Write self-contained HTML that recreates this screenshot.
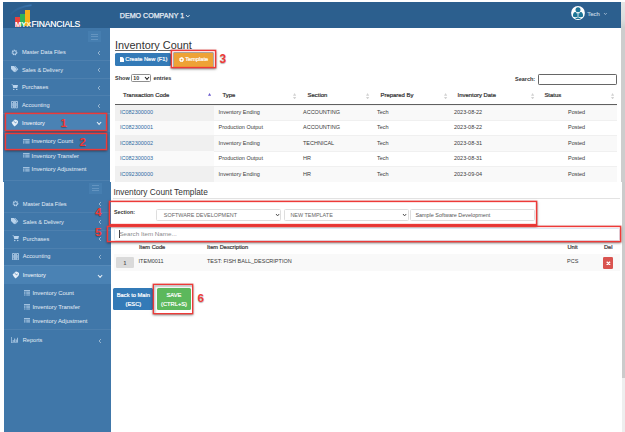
<!DOCTYPE html><html lang="en"><head><meta charset="utf-8"><title>Inventory Count</title><style>
*{box-sizing:border-box;margin:0;padding:0}
html,body{width:625px;height:432px;overflow:hidden;background:#fff}
body{position:relative;opacity:0.9999;font-family:"Liberation Sans",Arial,sans-serif;color:#333;font-size:5.5px;line-height:10px}
.a{position:absolute;white-space:nowrap}
.hd{background:#2c5f8e}
.sb{background:#4077a9}
.mi{color:#e3ecf5;font-size:5.6px;left:22px}
.mi2{color:#e6eef6;font-size:5.9px}
.dv{height:0.8px;background:rgba(255,255,255,.07);left:3px;width:107px}
.chev{color:#c9d9e8;font-size:6px;font-family:"DejaVu Sans",sans-serif}
.th{font-weight:bold;color:#333;font-size:5.5px}
.td{font-size:5.5px;color:#3a3a3a}
.lk{color:#2f6aa3}
.row{left:115px;width:501.5px;height:15.5px}
.odd{background:#f9f9f9}
.s1{left:115px;width:99px;height:15.5px}
.rb{border:1px solid #ee3a38;box-shadow:0 0 0 0.45px rgba(238,58,56,.75),inset 0 0 0 0.3px rgba(238,58,56,.6),0 1px 2.5px rgba(0,0,0,.55)}
.num{color:#ee3a38;font-weight:bold;font-size:13px;line-height:14px;text-shadow:0 0.5px 1px rgba(0,0,0,.3)}
.btn{color:#fff;font-weight:normal;-webkit-text-stroke:0.2px #fff;font-size:5.7px;text-align:center;border-radius:1.5px}
.fc{border:1px solid #dedede;border-radius:1.5px;background:#fff;height:12.5px;top:208.5px}
.sorticon{color:#ccc;font-size:4px;line-height:3px;font-family:"DejaVu Sans",sans-serif}
</style></head><body>
<div class="a" style="left:621px;top:2px;width:4px;height:180px;background:#cdcdcd"></div>
<div class="a" style="left:621px;top:2px;width:4px;height:26px;background:linear-gradient(#e6e6e6,#dcdcdc 70%,#cdcdcd)"></div>
<div class="a" style="left:622.3px;top:181.6px;width:3px;height:250.4px;background:#eee"></div>
<div class="a" style="left:622.3px;top:181.6px;width:3px;height:196px;background:#cbcbcb"></div>
<div class="a hd" style="left:3px;top:2px;width:618px;height:26.4px"></div>
<div class="a sb" style="left:3px;top:28.3px;width:107px;height:153.7px"></div>
<div class="a sb" style="left:3.5px;top:181.6px;width:107.7px;height:251px"></div>
<svg class="a" style="left:8px;top:4px" width="26" height="16" viewBox="0 0 26 16"><defs><linearGradient id="ag" x1="0" y1="0" x2="1" y2="0"><stop offset="0" stop-color="#3a74ad" stop-opacity=".15"/><stop offset="1" stop-color="#3d7cba" stop-opacity=".8"/></linearGradient></defs><path d="M2.5 10.5 Q9 3 23.5 1.2" fill="none" stroke="url(#ag)" stroke-width="1.7"/></svg>
<div class="a" style="left:15.1px;top:17px;width:4.9px;height:9.5px;background:#e8413c"></div>
<div class="a" style="left:20px;top:14.4px;width:4.9px;height:12.1px;background:#2fb457"></div>
<div class="a" style="left:25px;top:10.2px;width:5.2px;height:16.3px;background:#f5b21a"></div>
<div class="a" style="left:14.8px;top:20.6px;font-size:6.3px;font-weight:bold;color:#fff;line-height:7px;transform-origin:0 0;transform:scaleX(1.2)">MY<span style="color:#fff3c4">X</span></div>
<div class="a" style="left:31.5px;top:19.4px;font-size:8.6px;color:#f0f4f8;line-height:10px;letter-spacing:-0.2px;text-shadow:0 0 0.4px #f0f4f8">FINANCIALS</div>
<div class="a" style="left:119.8px;top:10.7px;font-size:7.1px;font-weight:normal;-webkit-text-stroke:0.25px #e8eef5;color:#e8eef5;line-height:10px">DEMO COMPANY 1</div>
<svg class="a" style="left:185.2px;top:14.2px" width="5.6" height="4" viewBox="0 0 5.6 4"><path d="M1 1 L2.8 3 L4.6 1" fill="none" stroke="#dfe8f1" stroke-width="0.9"/></svg>
<svg class="a" style="left:571.2px;top:6.3px" width="14" height="14" viewBox="0 0 14 14"><circle cx="7" cy="7" r="6.9" fill="#fff"/><circle cx="7" cy="3.7" r="2.5" fill="#1d7596"/><path d="M1.9 10.6 Q1.9 6.2 4.2 6.1 Q6.3 6.2 6.2 10.9 Q4 11.6 1.9 10.6 Z" fill="#1d7596"/><path d="M12.1 10.6 Q12.1 6.2 9.8 6.1 Q7.7 6.2 7.8 10.9 Q10 11.6 12.1 10.6 Z" fill="#1d7596"/><path d="M6.45 7.2 H7.55 V11.9 H9.4 V12.9 H4.6 V11.9 H6.45 Z" fill="#1d7596"/></svg>
<div class="a" style="left:587.3px;top:9.1px;font-size:5.9px;font-weight:normal;-webkit-text-stroke:0.2px #b4c8dc;color:#b4c8dc;line-height:10px">Tech</div>
<svg class="a" style="left:603.2px;top:12.399999999999999px" width="4.8" height="3.6" viewBox="0 0 4.8 3.6"><path d="M1 1 L2.4 2.6 L3.8 1" fill="none" stroke="#a9c0d6" stroke-width="0.8"/></svg>
<div class="a" style="left:88.2px;top:31.1px;width:13.1px;height:11.2px;background:#467eb0"></div>
<div class="a" style="left:91.10000000000001px;top:33.7px;width:7.3px;height:0.9px;background:#6494c0"></div>
<div class="a" style="left:91.10000000000001px;top:36.25px;width:7.3px;height:0.9px;background:#6494c0"></div>
<div class="a" style="left:91.10000000000001px;top:38.800000000000004px;width:7.3px;height:0.9px;background:#6494c0"></div>
<div class="a" style="left:89.4px;top:182.6px;width:12.6px;height:11.2px;background:#467eb0"></div>
<div class="a" style="left:92.30000000000001px;top:185.2px;width:6.8px;height:0.9px;background:#6494c0"></div>
<div class="a" style="left:92.30000000000001px;top:187.75px;width:6.8px;height:0.9px;background:#6494c0"></div>
<div class="a" style="left:92.30000000000001px;top:190.29999999999998px;width:6.8px;height:0.9px;background:#6494c0"></div>
<div class="a" style="left:3px;top:113px;width:107px;height:18.6px;background:#4a82b4"></div>
<svg class="a" style="left:11px;top:48.7px" width="7" height="7" viewBox="0 0 14 14"><circle cx="7" cy="7" r="4.6" fill="none" stroke="#b9d3ec" stroke-width="2.2" stroke-dasharray="2.4 1.2"/><circle cx="7" cy="7" r="3.4" fill="none" stroke="#b9d3ec" stroke-width="1.6"/></svg>
<div class="a mi" style="left:21.9px;top:47.2px;color:#e3ecf5">Master Data Files</div>
<svg class="a" style="left:97.0px;top:49.800000000000004px" width="4" height="6" viewBox="0 0 4 6"><path d="M3 1 L1 3.0 L3 5" fill="none" stroke="#b9cde0" stroke-width="0.7"/></svg>
<svg class="a" style="left:10.5px;top:66.3px" width="8" height="6.5" viewBox="0 0 16 13"><path d="M0 0 H6 L12 6.5 L6.5 12.5 L0 6 Z" fill="#b9d3ec"/><path d="M8.5 0 L14.5 6.5 L9 12.5 L8 11.5 L12.5 6.5 L7 0 Z" fill="#b9d3ec"/></svg>
<div class="a mi" style="left:21.9px;top:64.5px;color:#e3ecf5">Sales &amp; Delivery</div>
<svg class="a" style="left:97.0px;top:67.1px" width="4" height="6" viewBox="0 0 4 6"><path d="M3 1 L1 3.0 L3 5" fill="none" stroke="#b9cde0" stroke-width="0.7"/></svg>
<svg class="a" style="left:11px;top:83.8px" width="7.5" height="6.5" viewBox="0 0 15 13"><path d="M0 0.5 H3 L4 2 H14 L12.5 8 H4.5 L3 2 Z" fill="#b9d3ec"/><circle cx="5.5" cy="11" r="1.5" fill="#b9d3ec"/><circle cx="11.5" cy="11" r="1.5" fill="#b9d3ec"/></svg>
<div class="a mi" style="left:21.9px;top:82.1px;color:#e3ecf5">Purchases</div>
<svg class="a" style="left:97.0px;top:84.69999999999999px" width="4" height="6" viewBox="0 0 4 6"><path d="M3 1 L1 3.0 L3 5" fill="none" stroke="#b9cde0" stroke-width="0.7"/></svg>
<svg class="a" style="left:11px;top:101.2px" width="7" height="7.4" viewBox="0 0 14 15"><path d="M1 1 H5 V14 H1 Z M9 1 H13 V14 H9 Z" fill="none" stroke="#b9d3ec" stroke-width="1.6"/><path d="M6.3 0 H7.7 V15 H6.3 Z" fill="#b9d3ec"/><path d="M2.5 4 H3.6 V11 H2.5 Z M10.4 4 H11.5 V11 H10.4 Z" fill="#b9d3ec"/></svg>
<div class="a mi" style="left:21.9px;top:99.9px;color:#e3ecf5">Accounting</div>
<svg class="a" style="left:97.0px;top:102.5px" width="4" height="6" viewBox="0 0 4 6"><path d="M3 1 L1 3.0 L3 5" fill="none" stroke="#b9cde0" stroke-width="0.7"/></svg>
<svg class="a" style="left:10.6px;top:118.7px" width="7.6" height="8" viewBox="0 0 15 16"><path d="M1 7 L7.5 0.8 Q11 0.5 14 4.2 Q14.5 8 12 10.5 L7.2 15.2 Q4 13 1 7 Z" fill="#e4eef8"/><path d="M4.5 4.8 L6.5 3.4 L8 5.2 Z" fill="#4a82b4"/><path d="M7.2 6.2 Q8.2 9.2 11 6.2" fill="none" stroke="#4a82b4" stroke-width="1.7"/></svg>
<div class="a mi" style="left:21.9px;top:117.9px;color:#fff">Inventory</div>
<svg class="a" style="left:95.9px;top:121.2px" width="6.2" height="4.4" viewBox="0 0 6.2 4.4"><path d="M1 1 L3.1 3.4 L5.2 1" fill="none" stroke="#e9f0f7" stroke-width="1.05"/></svg>
<div class="a dv" style="top:60.4px;left:3px"></div>
<div class="a dv" style="top:77.8px;left:3px"></div>
<div class="a dv" style="top:95.2px;left:3px"></div>
<div class="a dv" style="top:112.6px;left:3px"></div>
<div class="a" style="left:3.5px;top:264.6px;width:107.7px;height:19.4px;background:#4a82b4"></div>
<svg class="a" style="left:11.9px;top:200.2px" width="7" height="7" viewBox="0 0 14 14"><circle cx="7" cy="7" r="4.6" fill="none" stroke="#b9d3ec" stroke-width="2.2" stroke-dasharray="2.4 1.2"/><circle cx="7" cy="7" r="3.4" fill="none" stroke="#b9d3ec" stroke-width="1.6"/></svg>
<div class="a mi" style="left:22.799999999999997px;top:198.7px;color:#e3ecf5">Master Data Files</div>
<svg class="a" style="left:98.0px;top:201.29999999999998px" width="4" height="6" viewBox="0 0 4 6"><path d="M3 1 L1 3.0 L3 5" fill="none" stroke="#b9cde0" stroke-width="0.7"/></svg>
<svg class="a" style="left:11.4px;top:218.3px" width="8" height="6.5" viewBox="0 0 16 13"><path d="M0 0 H6 L12 6.5 L6.5 12.5 L0 6 Z" fill="#b9d3ec"/><path d="M8.5 0 L14.5 6.5 L9 12.5 L8 11.5 L12.5 6.5 L7 0 Z" fill="#b9d3ec"/></svg>
<div class="a mi" style="left:22.799999999999997px;top:216.5px;color:#e3ecf5">Sales &amp; Delivery</div>
<svg class="a" style="left:98.0px;top:219.1px" width="4" height="6" viewBox="0 0 4 6"><path d="M3 1 L1 3.0 L3 5" fill="none" stroke="#b9cde0" stroke-width="0.7"/></svg>
<svg class="a" style="left:11.9px;top:235.29999999999998px" width="7.5" height="6.5" viewBox="0 0 15 13"><path d="M0 0.5 H3 L4 2 H14 L12.5 8 H4.5 L3 2 Z" fill="#b9d3ec"/><circle cx="5.5" cy="11" r="1.5" fill="#b9d3ec"/><circle cx="11.5" cy="11" r="1.5" fill="#b9d3ec"/></svg>
<div class="a mi" style="left:22.799999999999997px;top:233.6px;color:#e3ecf5">Purchases</div>
<svg class="a" style="left:98.0px;top:236.2px" width="4" height="6" viewBox="0 0 4 6"><path d="M3 1 L1 3.0 L3 5" fill="none" stroke="#b9cde0" stroke-width="0.7"/></svg>
<svg class="a" style="left:11.9px;top:252.60000000000002px" width="7" height="7.4" viewBox="0 0 14 15"><path d="M1 1 H5 V14 H1 Z M9 1 H13 V14 H9 Z" fill="none" stroke="#b9d3ec" stroke-width="1.6"/><path d="M6.3 0 H7.7 V15 H6.3 Z" fill="#b9d3ec"/><path d="M2.5 4 H3.6 V11 H2.5 Z M10.4 4 H11.5 V11 H10.4 Z" fill="#b9d3ec"/></svg>
<div class="a mi" style="left:22.799999999999997px;top:251.3px;color:#e3ecf5">Accounting</div>
<svg class="a" style="left:98.0px;top:253.90000000000003px" width="4" height="6" viewBox="0 0 4 6"><path d="M3 1 L1 3.0 L3 5" fill="none" stroke="#b9cde0" stroke-width="0.7"/></svg>
<svg class="a" style="left:11.5px;top:271.0px" width="7.6" height="8" viewBox="0 0 15 16"><path d="M1 7 L7.5 0.8 Q11 0.5 14 4.2 Q14.5 8 12 10.5 L7.2 15.2 Q4 13 1 7 Z" fill="#e4eef8"/><path d="M4.5 4.8 L6.5 3.4 L8 5.2 Z" fill="#4a82b4"/><path d="M7.2 6.2 Q8.2 9.2 11 6.2" fill="none" stroke="#4a82b4" stroke-width="1.7"/></svg>
<div class="a mi" style="left:22.799999999999997px;top:270.2px;color:#fff">Inventory</div>
<svg class="a" style="left:96.9px;top:273.5px" width="6.2" height="4.4" viewBox="0 0 6.2 4.4"><path d="M1 1 L3.1 3.4 L5.2 1" fill="none" stroke="#e9f0f7" stroke-width="1.05"/></svg>
<div class="a dv" style="top:212.4px;left:3.9px"></div>
<div class="a dv" style="top:230px;left:3.9px"></div>
<div class="a dv" style="top:247.6px;left:3.9px"></div>
<div class="a dv" style="top:265.2px;left:3.9px"></div>
<div class="a" style="left:5.2px;top:132.8px;width:102.2px;height:17.6px;background:#3c73a6"></div>
<svg class="a" style="left:23px;top:138.6px" width="6.6" height="5.6" viewBox="0 0 13 11"><path d="M0 0 H13 V2.4 H0 Z M0 3.6 H3 V5.4 H0 Z M4.4 3.6 H13 V5.4 H4.4 Z M0 6.4 H3 V8.2 H0 Z M4.4 6.4 H13 V8.2 H4.4 Z M0 9.2 H3 V11 H0 Z M4.4 9.2 H13 V11 H4.4 Z" fill="#b9d3ec" opacity=".8"/></svg>
<div class="a mi2" style="left:31.5px;top:136.4px">Inventory Count</div>
<svg class="a" style="left:23px;top:152.79999999999998px" width="6.6" height="5.6" viewBox="0 0 13 11"><path d="M0 0 H13 V2.4 H0 Z M0 3.6 H3 V5.4 H0 Z M4.4 3.6 H13 V5.4 H4.4 Z M0 6.4 H3 V8.2 H0 Z M4.4 6.4 H13 V8.2 H4.4 Z M0 9.2 H3 V11 H0 Z M4.4 9.2 H13 V11 H4.4 Z" fill="#b9d3ec" opacity=".8"/></svg>
<div class="a mi2" style="left:31.5px;top:150.6px">Inventory Transfer</div>
<svg class="a" style="left:23px;top:166.5px" width="6.6" height="5.6" viewBox="0 0 13 11"><path d="M0 0 H13 V2.4 H0 Z M0 3.6 H3 V5.4 H0 Z M4.4 3.6 H13 V5.4 H4.4 Z M0 6.4 H3 V8.2 H0 Z M4.4 6.4 H13 V8.2 H4.4 Z M0 9.2 H3 V11 H0 Z M4.4 9.2 H13 V11 H4.4 Z" fill="#b9d3ec" opacity=".8"/></svg>
<div class="a mi2" style="left:31.5px;top:164.3px">Inventory Adjustment</div>
<svg class="a" style="left:23.9px;top:290.4px" width="6.6" height="5.6" viewBox="0 0 13 11"><path d="M0 0 H13 V2.4 H0 Z M0 3.6 H3 V5.4 H0 Z M4.4 3.6 H13 V5.4 H4.4 Z M0 6.4 H3 V8.2 H0 Z M4.4 6.4 H13 V8.2 H4.4 Z M0 9.2 H3 V11 H0 Z M4.4 9.2 H13 V11 H4.4 Z" fill="#b9d3ec" opacity=".8"/></svg>
<div class="a mi2" style="left:32.4px;top:288.2px">Inventory Count</div>
<svg class="a" style="left:23.9px;top:304.3px" width="6.6" height="5.6" viewBox="0 0 13 11"><path d="M0 0 H13 V2.4 H0 Z M0 3.6 H3 V5.4 H0 Z M4.4 3.6 H13 V5.4 H4.4 Z M0 6.4 H3 V8.2 H0 Z M4.4 6.4 H13 V8.2 H4.4 Z M0 9.2 H3 V11 H0 Z M4.4 9.2 H13 V11 H4.4 Z" fill="#b9d3ec" opacity=".8"/></svg>
<div class="a mi2" style="left:32.4px;top:302.1px">Inventory Transfer</div>
<svg class="a" style="left:23.9px;top:317.7px" width="6.6" height="5.6" viewBox="0 0 13 11"><path d="M0 0 H13 V2.4 H0 Z M0 3.6 H3 V5.4 H0 Z M4.4 3.6 H13 V5.4 H4.4 Z M0 6.4 H3 V8.2 H0 Z M4.4 6.4 H13 V8.2 H4.4 Z M0 9.2 H3 V11 H0 Z M4.4 9.2 H13 V11 H4.4 Z" fill="#b9d3ec" opacity=".8"/></svg>
<div class="a mi2" style="left:32.4px;top:315.5px">Inventory Adjustment</div>
<div class="a dv" style="top:179.6px"></div>
<div class="a dv" style="top:329.4px;left:3.9px"></div>
<div class="a" style="left:3px;top:381px;width:1.3px;height:51px;background:#fff"></div>
<svg class="a" style="left:10.8px;top:336.7px" width="7.4" height="6.4" viewBox="0 0 15 13"><path d="M0.5 0 H1.8 V11.2 H15 V12.5 H0.5 Z M3.5 6 H5.3 V10 H3.5 Z M6.6 3 H8.4 V10 H6.6 Z M9.7 5 H11.5 V10 H9.7 Z M12.6 1.5 H14.2 V10 H12.6 Z" fill="#b9d3ec"/></svg>
<div class="a mi" style="left:22.8px;top:335px">Reports</div>
<svg class="a" style="left:98.0px;top:337.6px" width="4" height="6" viewBox="0 0 4 6"><path d="M3 1 L1 3.0 L3 5" fill="none" stroke="#b9cde0" stroke-width="0.7"/></svg>
<div class="a rb" style="left:5.2px;top:113.3px;width:102.2px;height:17.7px"></div>
<div class="a rb" style="left:5.2px;top:132.8px;width:102.2px;height:17.6px"></div>
<div class="a num" style="left:60.6px;top:116px;font-size:11.5px">1</div>
<div class="a num" style="left:79.6px;top:134.6px;font-size:11.5px">2</div>
<div class="a" style="left:115px;top:38.5px;font-size:10.9px;line-height:13px;color:#333;text-decoration:underline;text-decoration-thickness:0.8px;text-decoration-color:#6a6a6a;text-underline-offset:1px">Inventory Count</div>
<div class="a btn" style="left:114.6px;top:53.3px;width:56.4px;height:13px;background:#337ab7;line-height:13px;padding-left:1.5px"><svg width="4" height="5" viewBox="0 0 8 10" style="vertical-align:-0.8px;margin-right:1.6px"><path d="M0 0 H5 L8 3 V10 H0 Z" fill="#fff"/></svg>Create New (F1)</div>
<div class="a btn" style="left:173.6px;top:52.8px;width:39.9px;height:13.8px;background:#eea236;line-height:13.6px;border-radius:0.6px;box-shadow:0 0 0 0.9px #a8a29a"><svg width="5.2" height="5.2" viewBox="0 0 10 10" style="vertical-align:-1px;margin-right:1.2px"><circle cx="5" cy="5" r="3" fill="none" stroke="#fff" stroke-width="2.6"/><circle cx="5" cy="5" r="4.2" fill="none" stroke="#fff" stroke-width="1.6" stroke-dasharray="1.6 1.7"/></svg>Template</div>
<div class="a rb" style="left:170.7px;top:50.4px;width:45.3px;height:17.2px"></div>
<div class="a num" style="left:219.6px;top:51.6px;font-size:12px">3</div>
<div class="a th" style="left:115px;top:73.2px">Show</div>
<div class="a" style="left:131.2px;top:74.2px;width:20.1px;height:8.3px;border:1px solid #8f8f8f;border-radius:1.4px;background:#fff"></div>
<div class="a td" style="left:133.3px;top:73.4px;font-size:5.3px;font-weight:bold">10</div>
<svg class="a" style="left:143.8px;top:76.44999999999999px" width="6" height="4.3" viewBox="0 0 6 4.3"><path d="M1 1 L3.0 3.3 L5 1" fill="none" stroke="#222" stroke-width="1.1"/></svg>
<div class="a th" style="left:153.4px;top:73.2px">entries</div>
<div class="a th" style="left:515px;top:74.2px">Search:</div>
<div class="a" style="left:537.5px;top:74.2px;width:79.1px;height:11px;border:1px solid #666;border-radius:1.2px;background:#fff"></div>
<div class="a th" style="left:123px;top:90.4px;font-weight:normal;font-size:5.92px;-webkit-text-stroke:0.22px #333">Transaction Code</div>
<div class="a th" style="left:222.6px;top:90.4px;font-weight:normal;font-size:5.92px;-webkit-text-stroke:0.22px #333">Type</div>
<div class="a th" style="left:307.6px;top:90.4px;font-weight:normal;font-size:5.92px;-webkit-text-stroke:0.22px #333">Section</div>
<div class="a th" style="left:380.6px;top:90.4px;font-weight:normal;font-size:5.92px;-webkit-text-stroke:0.22px #333">Prepared By</div>
<div class="a th" style="left:457.6px;top:90.4px;font-weight:normal;font-size:5.92px;-webkit-text-stroke:0.22px #333">Inventory Date</div>
<div class="a th" style="left:544.4px;top:90.4px;font-weight:normal;font-size:5.92px;-webkit-text-stroke:0.22px #333">Status</div>
<div class="a" style="left:115px;top:104px;width:501.5px;height:1px;background:#606060"></div>
<svg class="a" style="left:207.7px;top:93px" width="3.2" height="2.8" viewBox="0 0 8 7"><path d="M4 0 L8 7 H0 Z" fill="#6a5acd"/></svg>
<svg class="a" style="left:293.4px;top:92.6px" width="3.2" height="6.6" viewBox="0 0 8 16"><path d="M4 0 L8 6.5 H0 Z M4 16 L8 9.5 H0 Z" fill="#d2d2d2"/></svg>
<svg class="a" style="left:366.4px;top:92.6px" width="3.2" height="6.6" viewBox="0 0 8 16"><path d="M4 0 L8 6.5 H0 Z M4 16 L8 9.5 H0 Z" fill="#d2d2d2"/></svg>
<svg class="a" style="left:444.4px;top:92.6px" width="3.2" height="6.6" viewBox="0 0 8 16"><path d="M4 0 L8 6.5 H0 Z M4 16 L8 9.5 H0 Z" fill="#d2d2d2"/></svg>
<svg class="a" style="left:531.4px;top:92.6px" width="3.2" height="6.6" viewBox="0 0 8 16"><path d="M4 0 L8 6.5 H0 Z M4 16 L8 9.5 H0 Z" fill="#d2d2d2"/></svg>
<svg class="a" style="left:611.0px;top:92.6px" width="3.2" height="6.6" viewBox="0 0 8 16"><path d="M4 0 L8 6.5 H0 Z M4 16 L8 9.5 H0 Z" fill="#d2d2d2"/></svg>
<div class="a row" style="top:104.6px;background:#f9f9f9;border-top:0.6px solid #f0f0f0"></div>
<div class="a s1" style="top:105.19999999999999px;height:14.9px;background:#f0f0f0"></div>
<div class="a td lk" style="left:120px;top:106.89999999999999px">IC082300000</div>
<div class="a td" style="left:218.6px;top:106.89999999999999px">Inventory Ending</div>
<div class="a td" style="left:303px;top:106.89999999999999px">ACCOUNTING</div>
<div class="a td" style="left:377px;top:106.89999999999999px">Tech</div>
<div class="a td" style="left:454px;top:106.89999999999999px">2023-08-22</div>
<div class="a td" style="left:568px;top:106.89999999999999px">Posted</div>
<div class="a row" style="top:120.0px;background:#fff;border-top:0.6px solid #f0f0f0"></div>
<div class="a s1" style="top:120.6px;height:14.9px;background:#fafafa"></div>
<div class="a td lk" style="left:120px;top:122.3px">IC082300001</div>
<div class="a td" style="left:218.6px;top:122.3px">Production Output</div>
<div class="a td" style="left:303px;top:122.3px">ACCOUNTING</div>
<div class="a td" style="left:377px;top:122.3px">Tech</div>
<div class="a td" style="left:454px;top:122.3px">2023-08-22</div>
<div class="a td" style="left:568px;top:122.3px">Posted</div>
<div class="a row" style="top:135.4px;background:#f9f9f9;border-top:0.6px solid #f0f0f0"></div>
<div class="a s1" style="top:136.0px;height:14.9px;background:#f0f0f0"></div>
<div class="a td lk" style="left:120px;top:137.70000000000002px">IC082300002</div>
<div class="a td" style="left:218.6px;top:137.70000000000002px">Inventory Ending</div>
<div class="a td" style="left:303px;top:137.70000000000002px">TECHNICAL</div>
<div class="a td" style="left:377px;top:137.70000000000002px">Tech</div>
<div class="a td" style="left:454px;top:137.70000000000002px">2023-08-31</div>
<div class="a td" style="left:568px;top:137.70000000000002px">Posted</div>
<div class="a row" style="top:150.8px;background:#fff;border-top:0.6px solid #f0f0f0"></div>
<div class="a s1" style="top:151.4px;height:14.9px;background:#fafafa"></div>
<div class="a td lk" style="left:120px;top:153.10000000000002px">IC082300003</div>
<div class="a td" style="left:218.6px;top:153.10000000000002px">Production Output</div>
<div class="a td" style="left:303px;top:153.10000000000002px">HR</div>
<div class="a td" style="left:377px;top:153.10000000000002px">Tech</div>
<div class="a td" style="left:454px;top:153.10000000000002px">2023-08-31</div>
<div class="a td" style="left:568px;top:153.10000000000002px">Posted</div>
<div class="a row" style="top:166.2px;background:#f9f9f9;border-top:0.6px solid #f0f0f0"></div>
<div class="a s1" style="top:166.79999999999998px;height:14.9px;background:#f0f0f0"></div>
<div class="a td lk" style="left:120px;top:168.5px">IC092300000</div>
<div class="a td" style="left:218.6px;top:168.5px">Inventory Ending</div>
<div class="a td" style="left:303px;top:168.5px">HR</div>
<div class="a td" style="left:377px;top:168.5px">Tech</div>
<div class="a td" style="left:454px;top:168.5px">2023-09-04</div>
<div class="a td" style="left:568px;top:168.5px">Posted</div>
<div class="a" style="left:113.4px;top:185.5px;font-size:8.3px;line-height:12px;color:#333">Inventory Count Template</div>
<div class="a" style="left:113px;top:198.2px;width:507px;height:0.6px;background:#e3e3e3"></div>
<div class="a th" style="left:114px;top:206.5px;font-size:5.3px">Section:</div>
<div class="a fc" style="left:156px;width:125.4px"></div>
<div class="a fc" style="left:283.6px;width:125px"></div>
<div class="a fc" style="left:410.4px;width:124.6px"></div>
<div class="a" style="left:163.8px;top:209.9px;font-size:5.45px;color:#666">SOFTWARE DEVELOPMENT</div>
<div class="a" style="left:290.4px;top:209.9px;font-size:5.45px;color:#666">NEW TEMPLATE</div>
<div class="a" style="left:415.4px;top:209.9px;font-size:5.45px;color:#555">Sample Software Development</div>
<svg class="a" style="left:275.09999999999997px;top:213.05px" width="5.2" height="3.9" viewBox="0 0 5.2 3.9"><path d="M1 1 L2.6 2.9 L4.2 1" fill="none" stroke="#4a4a4a" stroke-width="0.95"/></svg>
<svg class="a" style="left:402.09999999999997px;top:213.05px" width="5.2" height="3.9" viewBox="0 0 5.2 3.9"><path d="M1 1 L2.6 2.9 L4.2 1" fill="none" stroke="#4a4a4a" stroke-width="0.95"/></svg>
<div class="a rb" style="left:109px;top:201px;width:427.5px;height:25px;border-bottom-width:2px"></div>
<div class="a" style="left:113.5px;top:228.2px;width:506px;height:12.6px;border:0.6px solid #dde8f3;border-radius:1.5px;background:#fff"></div>
<div class="a" style="left:118.6px;top:230px;width:0.6px;height:8.4px;background:#444"></div>
<div class="a" style="left:119.4px;top:229.3px;font-size:6.25px;color:#8a8a8a">Search Item Name...</div>
<div class="a rb" style="left:107.4px;top:225.8px;width:513.4px;height:16.4px"></div>
<div class="a num" style="left:95px;top:205.2px;font-size:11.8px">4</div>
<div class="a num" style="left:95px;top:224.6px;font-size:11.8px">5</div>
<div class="a th" style="left:139px;top:242.4px;font-size:5.7px;font-weight:normal;-webkit-text-stroke:0.22px #3a3a3a;color:#3a3a3a">Item Code</div>
<div class="a th" style="left:207px;top:242.4px;font-size:5.7px;font-weight:normal;-webkit-text-stroke:0.22px #3a3a3a;color:#3a3a3a">Item Description</div>
<div class="a th" style="left:567.4px;top:242.4px;font-size:5.7px;font-weight:normal;-webkit-text-stroke:0.22px #3a3a3a;color:#3a3a3a">Unit</div>
<div class="a th" style="left:604px;top:242.4px;font-size:5.7px;font-weight:normal;-webkit-text-stroke:0.22px #3a3a3a;color:#3a3a3a">Del</div>
<div class="a" style="left:113.5px;top:253.5px;width:506px;height:0.9px;background:#d4d4d4"></div>
<div class="a" style="left:113.5px;top:254.4px;width:506px;height:16.6px;background:#f9f9f9"></div>
<div class="a" style="left:115.8px;top:257.2px;width:18px;height:11px;background:#dadada;border-radius:1.2px"></div>
<div class="a td" style="left:123.4px;top:258px;font-size:5px;font-weight:bold;color:#555">1</div>
<div class="a td" style="left:138.6px;top:255.6px">ITEM0011</div>
<div class="a td" style="left:207px;top:255.6px">TEST: FISH BALL_DESCRIPTION</div>
<div class="a td" style="left:567px;top:255.6px">PCS</div>
<div class="a" style="left:603.4px;top:257.4px;width:10px;height:11.2px;background:#d9534f;border-radius:1.3px"></div>
<svg class="a" style="left:606px;top:260.6px" width="4.8" height="4.8" viewBox="0 0 10 10"><path d="M1.5 1.5 L8.5 8.5 M8.5 1.5 L1.5 8.5" stroke="#fff" stroke-width="2.8"/></svg>
<div class="a btn" style="left:113.4px;top:288px;width:40px;height:21.6px;background:#337ab7;line-height:8.3px;padding-top:3.3px;font-size:5.75px">Back to Main<br>(ESC)</div>
<div class="a btn" style="left:156.6px;top:288px;width:34.8px;height:21.6px;background:#5cb85c;line-height:8.3px;padding-top:3.3px;font-size:5.75px">SAVE<br>(CTRL+S)</div>
<div class="a rb" style="left:152.6px;top:284px;width:40.4px;height:30px;box-shadow:0 0 0 0.45px rgba(238,58,56,.75),0 1px 2.5px rgba(0,0,0,.55),inset 1.5px 2px 1.5px rgba(0,0,0,.22)"></div>
<div class="a num" style="left:197.4px;top:290.6px;font-size:11.8px">6</div>
</body></html>
